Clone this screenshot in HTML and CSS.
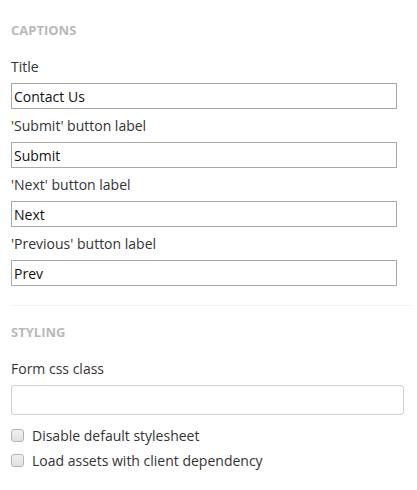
FILE: index.html
```html
<!DOCTYPE html>
<html>
<head>
<meta charset="utf-8">
<link rel="stylesheet" href="styles.css">
</head>
<body>
<div class="panel">
  <h3 class="section-title">CAPTIONS</h3>
  <div class="field">
    <label class="field-label">Title</label>
    <input class="text-input" type="text" value="Contact Us">
  </div>
  <div class="field">
    <label class="field-label">'Submit' button label</label>
    <input class="text-input" type="text" value="Submit">
  </div>
  <div class="field">
    <label class="field-label">'Next' button label</label>
    <input class="text-input" type="text" value="Next">
  </div>
  <div class="field">
    <label class="field-label">'Previous' button label</label>
    <input class="text-input" type="text" value="Prev">
  </div>
  <hr class="divider">
  <h3 class="section-title styling">STYLING</h3>
  <div class="field">
    <label class="field-label">Form css class</label>
    <input class="css-input" type="text" value="">
  </div>
  <label class="check-row"><input class="check" type="checkbox"><span>Disable default stylesheet</span></label>
  <label class="check-row"><input class="check" type="checkbox"><span>Load assets with client dependency</span></label>
</div>
</body>
</html>
```

FILE: styles.css
```css
html, body {
  margin: 0;
  padding: 0;
  background: #fff;
}
body {
  font-family: "Open Sans", "DejaVu Sans", sans-serif;
  color: #333;
}
.panel {
  padding: 22px 0 0 11px;
}
.section-title {
  margin: 0 0 20px 0;
  font-size: 13px;
  line-height: 16px;
  font-weight: 700;
  color: #b9b9b9;
}
.field {
  margin-bottom: 8px;
}
.field-label {
  display: block;
  font-size: 14px;
  line-height: 18px;
  margin-bottom: 7px;
  color: #333;
}
.text-input {
  display: block;
  box-sizing: border-box;
  width: 386px;
  height: 26px;
  margin: 0;
  padding: 1px 2px;
  border: 1px solid #a9a9a9;
  border-radius: 0;
  font-family: "Open Sans", "DejaVu Sans", sans-serif;
  font-size: 14px;
  color: #111;
  background: #fff;
  outline: none;
}
.css-input {
  display: block;
  box-sizing: border-box;
  width: 393px;
  height: 30px;
  margin: 0;
  padding: 4px 6px;
  border: 1px solid #cfcfcf;
  border-radius: 3px;
  font-family: "Open Sans", "DejaVu Sans", sans-serif;
  font-size: 14px;
  background: #fff;
  outline: none;
}
.divider {
  width: 400px;
  margin: 19px 0 0 0;
  border: 0;
  height: 1px;
  background: #f2f2f2;
}
.divider + .section-title {
  margin-top: 18px;
}
.check-row {
  display: flex;
  align-items: center;
  height: 25px;
  font-size: 14px;
  line-height: 25px;
  color: #333;
}
.check {
  appearance: none;
  -webkit-appearance: none;
  box-sizing: border-box;
  width: 13px;
  height: 13px;
  margin: 0 8px 0 0;
  border: 1px solid #b3b3b3;
  border-radius: 3px;
  background: linear-gradient(#f0f0f0, #e0e0e0);
}
```
